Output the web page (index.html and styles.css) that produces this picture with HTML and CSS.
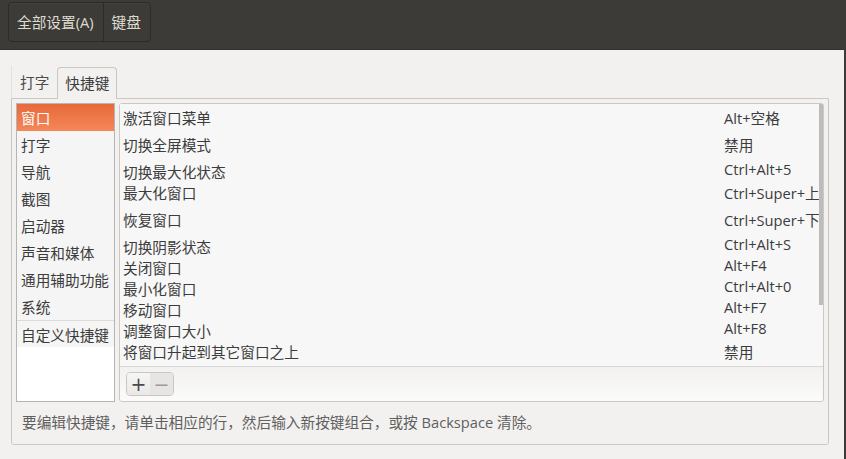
FILE: index.html
```html
<!DOCTYPE html>
<html lang="zh-CN">
<head>
<meta charset="utf-8">
<title>键盘</title>
<link rel="stylesheet" href="styles.css">
</head>
<body>
<div class="window">
  <header class="header">
    <div class="crumbs">
      <span class="crumb">全部设置(A)</span>
      <span class="crumb">键盘</span>
    </div>
  </header>
  <main class="content">
    <div class="tabs">
      <span class="tab">打字</span>
      <span class="tab active">快捷键</span>
    </div>
    <section class="frame">
      <div class="panes">
        <ul class="sidebar">
          <li class="cat selected">窗口</li>
          <li class="cat">打字</li>
          <li class="cat">导航</li>
          <li class="cat">截图</li>
          <li class="cat">启动器</li>
          <li class="cat">声音和媒体</li>
          <li class="cat">通用辅助功能</li>
          <li class="cat">系统</li>
          <li class="cat custom">自定义快捷键</li>
        </ul>
        <div class="listbox">
          <div class="list">
            <div class="row tall"><span class="name">激活窗口菜单</span><span class="value">Alt+空格</span></div>
            <div class="row tall"><span class="name">切换全屏模式</span><span class="value">禁用</span></div>
            <div class="row short"><span class="name">切换最大化状态</span><span class="value">Ctrl+Alt+5</span></div>
            <div class="row tall"><span class="name">最大化窗口</span><span class="value">Ctrl+Super+上</span></div>
            <div class="row tall"><span class="name">恢复窗口</span><span class="value">Ctrl+Super+下</span></div>
            <div class="row short"><span class="name">切换阴影状态</span><span class="value">Ctrl+Alt+S</span></div>
            <div class="row short"><span class="name">关闭窗口</span><span class="value">Alt+F4</span></div>
            <div class="row short"><span class="name">最小化窗口</span><span class="value">Ctrl+Alt+0</span></div>
            <div class="row short"><span class="name">移动窗口</span><span class="value">Alt+F7</span></div>
            <div class="row short"><span class="name">调整窗口大小</span><span class="value">Alt+F8</span></div>
            <div class="row tall"><span class="name">将窗口升起到其它窗口之上</span><span class="value">禁用</span></div>
            <div class="scrollthumb"></div>
          </div>
          <div class="toolbar">
            <div class="btngroup">
              <span class="btn plus">+</span>
              <span class="btn minus">−</span>
            </div>
          </div>
        </div>
      </div>
      <p class="hint">要编辑快捷键，请单击相应的行，然后输入新按键组合，或按 Backspace 清除。</p>
    </section>
  </main>
</div>
</body>
</html>
```
FILE: styles.css
```css
* { box-sizing: border-box; }
html, body { margin: 0; padding: 0; }
body {
  width: 846px;
  height: 459px;
  overflow: hidden;
  background: #3c3b37;
  font-family: "Open Sans", "Noto Sans CJK SC", sans-serif;
  font-size: 14.67px;
  color: #3c3c3c;
}
.window {
  width: 844px;
  height: 459px;
  background: #f2f1f0;
  display: flex;
  flex-direction: column;
}
.header {
  height: 50px;
  background: #3c3b37;
  padding: 2px 8px;
  border-bottom: 1px solid #33322f;
}
.crumbs {
  display: inline-flex;
  height: 40px;
  border: 1px solid #2c2b28;
  border-radius: 4px;
  box-shadow: inset 0 1px 0 rgba(255,255,255,0.04);
}
.crumb {
  display: flex;
  align-items: center;
  padding: 0 9px 0 8px;
  color: #dfdbd2;
  line-height: 18px;
  white-space: nowrap;
}
.crumb + .crumb {
  border-left: 1px solid #2c2b28;
}
.content {
  flex: 1;
  padding: 16px 15px 0 11px;
  display: flex;
  flex-direction: column;
}
.tabs {
  display: flex;
  height: 32px;
  align-items: flex-end;
}
.tab {
  height: 32px;
  padding: 7px 8px 0 8px;
  line-height: 18px;
  color: #4c4c4c;
  border-left: 1px solid #e2e0dd;
  white-space: nowrap;
}
.tab.active {
  padding: 6px 7px 0 7px;
  border: 1px solid #cbc8c3;
  border-bottom: none;
  border-radius: 4px 4px 0 0;
  background: #f2f1f0;
  color: #3c3c3c;
  position: relative;
  margin-bottom: -1px;
  height: 32px;
  z-index: 1;
}
.frame {
  width: 818px;
  height: 347px;
  border: 1px solid #cbc8c3;
  border-radius: 0 0 3px 3px;
  padding: 4px 4px 0 4px;
  display: flex;
  flex-direction: column;
}
.panes {
  display: flex;
  gap: 4px;
  height: 299px;
}
.sidebar {
  list-style: none;
  margin: 0;
  padding: 0;
  width: 99px;
  border: 1px solid #b7b5b1;
  background: #ffffff;
}
.cat {
  height: 27px;
  line-height: 28px;
  padding-left: 4px;
  background: #f5f5f5;
  white-space: nowrap;
  color: #3c3c3c;
}
.cat.selected {
  background: linear-gradient(#e8693a, #f4875a);
  color: #ffffff;
}
.cat.custom {
  border-top: 1px solid #dcdad7;
}
.listbox {
  width: 705px;
  border: 1px solid #cbc8c3;
  border-radius: 3px;
  background: #fbfbfa;
  display: flex;
  flex-direction: column;
}
.list {
  position: relative;
  height: 263px;
  background: #f7f7f7;
  border-bottom: 1px solid #d9d7d3;
}
.row {
  display: flex;
  align-items: center;
  padding-left: 3px;
}
.row.tall { height: 27px; }
.row.short { height: 21px; }
.name {
  flex: 1;
  align-self: flex-start;
  padding-top: 5px;
  line-height: 18px;
  white-space: nowrap;
}
.value {
  width: 99px;
  line-height: 18px;
  white-space: nowrap;
}
.scrollthumb {
  position: absolute;
  right: 0;
  top: 0;
  width: 4px;
  height: 201px;
  background: #bdbcba;
}
.toolbar {
  flex: 1;
  padding: 5px 0 0 6px;
  background: linear-gradient(#f2f1f0, #fbfbfa);
  border-radius: 0 0 3px 3px;
}
.btngroup {
  display: inline-flex;
  height: 24px;
  border: 1px solid #c9c7c3;
  border-radius: 4px;
  overflow: hidden;
}
.btn {
  width: 23px;
  display: flex;
  align-items: center;
  justify-content: center;
  font-family: "DejaVu Sans", sans-serif;
  font-size: 19px;
  line-height: 1;
}
.btn.plus {
  background: linear-gradient(#f6f6f5, #e9e8e6);
  color: #4a4a4a;
}
.btn.minus {
  background: #e6e5e3;
  color: #9a9a98;
}
.hint {
  margin: 0;
  flex: 1;
  display: flex;
  align-items: center;
  padding-left: 6px;
  padding-bottom: 2px;
  color: #5f5f5f;
  line-height: 18px;
}
```
